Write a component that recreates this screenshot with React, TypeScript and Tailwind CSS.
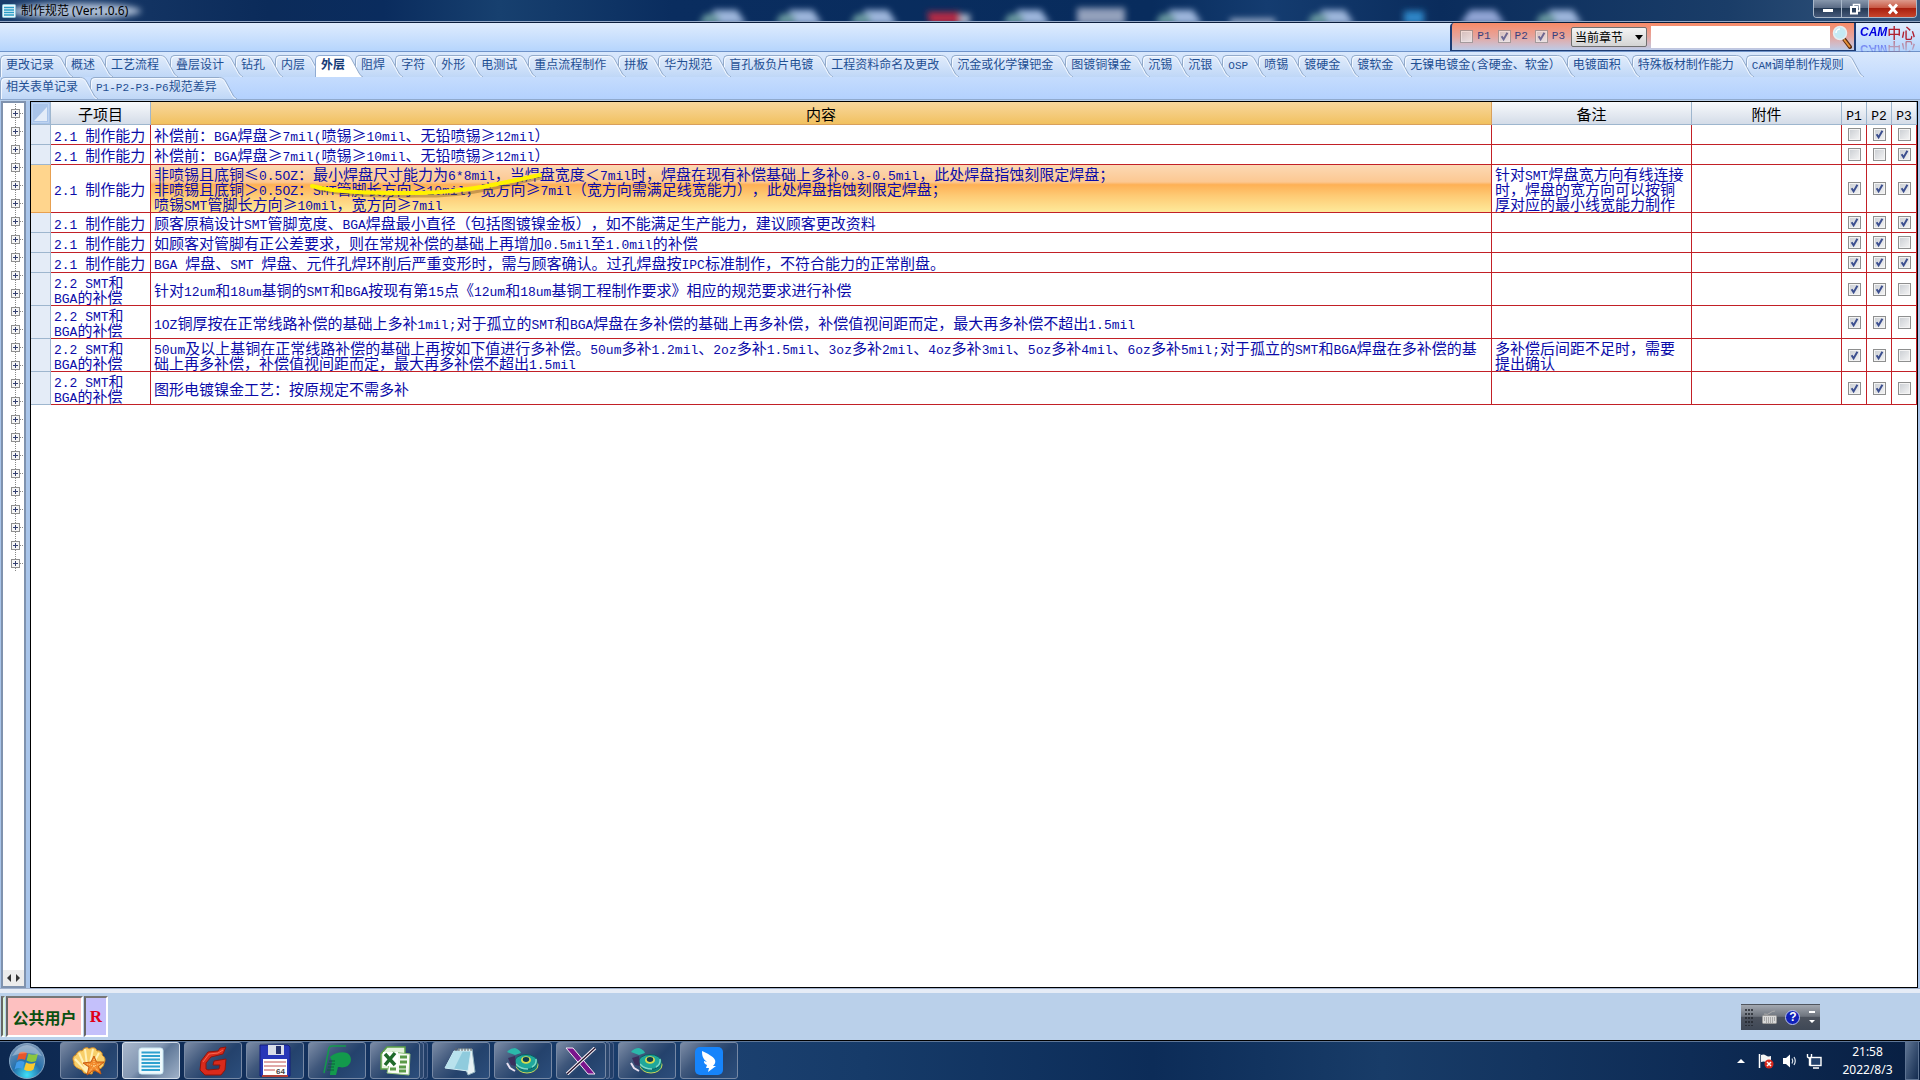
import React from "react";

const CJK = "font-['Noto_Sans_CJK_SC',sans-serif]";
const MONO = "font-['Liberation_Mono',monospace]";
const UI = "font-['Noto_Sans','Noto_Sans_CJK_SC',sans-serif]";

function Mixed({ text, latin = "text-[13px]" }: { text: string; latin?: string }) {
  return (
    <>
      {text.split(/([\x20-\x7e]+)/).map((part, i) =>
        i % 2 === 1 ? (
          <span key={i} className={`${MONO} leading-[6px] ${latin}`}>
            {part}
          </span>
        ) : (
          part
        ),
      )}
    </>
  );
}

function CheckBox({ checked, label, faded }: { checked: boolean; label: string; faded?: boolean }) {
  return (
    <span className={faded ? "relative block size-[13px] opacity-70" : "relative block size-[13px]"}>
      <input
        type="checkbox"
        defaultChecked={checked}
        aria-label={label}
        className="peer block size-[13px] appearance-none border border-[#8e8f8f] bg-linear-to-br from-[#c9cdd2] to-[#f6f6f6] shadow-[inset_0_0_0_1px_#f4f4f4]"
      />
      <svg viewBox="0 0 13 13" className="pointer-events-none absolute inset-0 hidden size-[13px] peer-checked:block">
        <path d="M3.6 6.2 L5.6 9.4 L9.4 2.8" fill="none" stroke="#3c4f8f" strokeWidth="2" />
      </svg>
    </span>
  );
}

const firstTabs = [
  "更改记录", "概述", "工艺流程", "叠层设计", "钻孔", "内层", "外层", "阻焊", "字符", "外形", "电测试",
  "重点流程制作", "拼板", "华为规范", "盲孔板负片电镀", "工程资料命名及更改", "沉金或化学镍钯金", "图镀铜镍金",
  "沉锡", "沉银", "OSP", "喷锡", "镀硬金", "镀软金", "无镍电镀金(含硬金、软金）", "电镀面积", "特殊板材制作能力",
  "CAM调单制作规则",
];
const secondTabs = ["相关表单记录", "P1-P2-P3-P6规范差异"];

function tabPadding(text: string) {
  if (text.endsWith("）")) return "pr-[6px]";
  if (text.length === 2 || text === "OSP") return "pr-[10px]";
  return text.length <= 5 ? "pr-[11px]" : "pr-[12px]";
}

function Tab({ text, z, active }: { text: string; z: number; active?: boolean }) {
  return (
    <button
      type="button"
      role="tab"
      aria-selected={!!active}
      style={{ zIndex: z }}
      className={`relative h-[22px] shrink-0 pb-[4px] pl-[6px] text-left text-[12px] leading-[16px] whitespace-nowrap ${tabPadding(text)} ${active ? "font-bold text-[#153a75]" : "text-[#1f4f93]"}`}
    >
      <span
        className={`absolute inset-y-0 right-[11px] left-0 rounded-tl-[5px] border-t border-l ${active ? "border-[#8fabd3] bg-white" : "border-[#93abcb] bg-linear-to-b from-[#e3edfb] to-[#bfd7f7] shadow-[inset_1px_1px_0_#f3f8ff]"}`}
      />
      <svg viewBox="0 0 19 22" className="absolute top-0 -right-[8px] h-[22px] w-[19px]">
        <defs>
          <linearGradient id="tabEdge" x1="0" y1="0" x2="0" y2="1">
            <stop offset="0" stopColor="#e3edfb" />
            <stop offset="1" stopColor="#bfd7f7" />
          </linearGradient>
        </defs>
        <path d="M0 0 C5 0 6.5 2 8 5 L15 18 Q17 21.5 19 22 L0 22Z" fill={active ? "#ffffff" : "url(#tabEdge)"} />
        <path d="M0 .5 C5 .5 6.5 2 8 5 L15 18 Q17 21.5 19 22" fill="none" stroke="#93abcb" />
        {!active && <path d="M0 1.5 C4.5 1.5 5.5 3 7 5.5 L14 18.5 Q16 21.5 18 22" fill="none" stroke="#f3f8ff" />}
      </svg>
      <span className="relative">
        <Mixed text={text} latin="text-[11px]" />
      </span>
    </button>
  );
}

type Row = { sub: string; body: string; note?: string; checks: [number, number, number]; size: "s" | "m" | "l" };
const rows: Row[] = [
  { sub: "2.1 制作能力", body: "补偿前：BGA焊盘≥7mil(喷锡≥10mil、无铅喷锡≥12mil）", checks: [0, 1, 0], size: "s" },
  { sub: "2.1 制作能力", body: "补偿前：BGA焊盘≥7mil(喷锡≥10mil、无铅喷锡≥12mil）", checks: [0, 0, 1], size: "s" },
  {
    sub: "2.1 制作能力",
    body: "非喷锡且底铜≤0.5OZ：最小焊盘尺寸能力为6*8mil，当焊盘宽度＜7mil时，焊盘在现有补偿基础上多补0.3-0.5mil，此处焊盘指蚀刻限定焊盘；\n非喷锡且底铜＞0.5OZ：SMT管脚长方向≥10mil，宽方向≥7mil（宽方向需满足线宽能力），此处焊盘指蚀刻限定焊盘；\n喷锡SMT管脚长方向≥10mil，宽方向≥7mil",
    note: "针对SMT焊盘宽方向有线连接\n时，焊盘的宽方向可以按铜\n厚对应的最小线宽能力制作",
    checks: [1, 1, 1],
    size: "l",
  },
  { sub: "2.1 制作能力", body: "顾客原稿设计SMT管脚宽度、BGA焊盘最小直径（包括图镀镍金板），如不能满足生产能力，建议顾客更改资料", checks: [1, 1, 1], size: "s" },
  { sub: "2.1 制作能力", body: "如顾客对管脚有正公差要求，则在常规补偿的基础上再增加0.5mil至1.0mil的补偿", checks: [1, 1, 0], size: "s" },
  { sub: "2.1 制作能力", body: "BGA 焊盘、SMT 焊盘、元件孔焊环削后严重变形时，需与顾客确认。过孔焊盘按IPC标准制作，不符合能力的正常削盘。", checks: [1, 1, 1], size: "s" },
  { sub: "2.2 SMT和\nBGA的补偿", body: "针对12um和18um基铜的SMT和BGA按现有第15点《12um和18um基铜工程制作要求》相应的规范要求进行补偿", checks: [1, 1, 0], size: "m" },
  { sub: "2.2 SMT和\nBGA的补偿", body: "1OZ铜厚按在正常线路补偿的基础上多补1mil;对于孤立的SMT和BGA焊盘在多补偿的基础上再多补偿，补偿值视间距而定，最大再多补偿不超出1.5mil", checks: [1, 1, 0], size: "m" },
  {
    sub: "2.2 SMT和\nBGA的补偿",
    body: "50um及以上基铜在正常线路补偿的基础上再按如下值进行多补偿。50um多补1.2mil、2oz多补1.5mil、3oz多补2mil、4oz多补3mil、5oz多补4mil、6oz多补5mil;对于孤立的SMT和BGA焊盘在多补偿的基\n础上再多补偿，补偿值视间距而定，最大再多补偿不超出1.5mil",
    note: "多补偿后间距不足时，需要\n提出确认",
    checks: [1, 1, 0],
    size: "m",
  },
  { sub: "2.2 SMT和\nBGA的补偿", body: "图形电镀镍金工艺：按原规定不需多补", checks: [1, 1, 0], size: "m" },
];

const rowHeight = { s: "h-[20px]", m: "h-[33px]", l: "h-[48px]" };
const cell = "border-r border-b border-[#c22026] p-0 align-middle";
const head = "h-[23px] border-r border-b border-[#9eb6ce] bg-linear-to-b from-[#f8fafc] to-[#d4dce8] p-0 text-center font-normal";

function SpecTable() {
  return (
    <table className="w-full table-fixed border-separate border-spacing-0 text-[15px] leading-[15px] text-[#0b0ba8]">
      <colgroup>
        <col className="w-[20px]" />
        <col className="w-[100px]" />
        <col />
        <col className="w-[200px]" />
        <col className="w-[150px]" />
        <col className="w-[25px]" />
        <col className="w-[25px]" />
        <col className="w-[25px]" />
      </colgroup>
      <thead className="text-black">
        <tr>
          <th className="h-[23px] border-r border-b border-[#9eb6ce] bg-[#a9c4e9] p-0">
            <svg viewBox="0 0 19 22" className="block h-[22px] w-[19px]">
              <path d="M1.5 1.5 H17.5 V20.5 H1.5Z" fill="none" stroke="#bdd3f0" />
              <path d="M16 5 V19 H3Z" fill="#e3ecf8" />
            </svg>
          </th>
          <th className={head}>子项目</th>
          <th className="h-[23px] border-r border-b border-[#d9a05c] bg-linear-to-b from-[#f8d79c] to-[#f1c15f] p-0 text-center font-normal">内容</th>
          <th className={head}>备注</th>
          <th className={head}>附件</th>
          {["P1", "P2", "P3"].map((p) => (
            <th key={p} className={head}>
              <Mixed text={p} />
            </th>
          ))}
        </tr>
      </thead>
      <tbody>
        {rows.map((r, i) => {
          const selected = r.size === "l";
          return (
            <tr key={i}>
              <td className={`${rowHeight[r.size]} border-r border-b p-0 ${selected ? "border-[#e8a050] bg-[#ffd58d]" : "border-[#9eb6ce] bg-[#e4ecf7]"}`} />
              <td className={`${cell} pl-[3px] whitespace-pre`}>
                <Mixed text={r.sub} />
              </td>
              <td
                className={`${cell} relative pl-[3px] whitespace-pre ${selected ? "bg-[linear-gradient(#fcd9b4,#fcc892_36%,#feb055_42%,#feca74_65%,#feea9b)]" : ""}`}
              >
                <Mixed text={r.body} />
                {selected && (
                  <svg viewBox="0 0 240 28" className="pointer-events-none absolute top-[6px] left-[156px] h-[28px] w-[240px]">
                    <path d="M8 18 C50 27 90 25 130 25 C165 24 190 16 234 7" fill="none" stroke="#7a5a20" strokeOpacity=".4" strokeWidth="3" strokeLinecap="round" />
                    <path d="M5 15 C35 23 80 22 112 22 C160 21 190 13 233 4" fill="none" stroke="#fff200" strokeWidth="4" strokeLinecap="round" />
                  </svg>
                )}
              </td>
              <td className={`${cell} pl-[3px] whitespace-pre`}>
                <Mixed text={r.note ?? ""} />
              </td>
              <td className={cell} />
              {r.checks.map((c, k) => (
                <td key={k} className={cell}>
                  <div className="flex justify-center">
                    <CheckBox checked={c === 1} label={`第${i + 1}行 P${k + 1}`} />
                  </div>
                </td>
              ))}
            </tr>
          );
        })}
      </tbody>
    </table>
  );
}

function DocIcon() {
  return (
    <svg viewBox="0 0 26 28" className="h-[28px] w-[26px]">
      <rect x="1" y="1" width="24" height="26" rx="2.5" fill="#eef9fd" stroke="#c7e6f2" />
      <path d="M3.500 5.500H22M3.500 9H22M3.500 12.500H22M3.500 16H22M3.500 19.500H22M3.500 23H22" stroke="#2fa0cf" strokeWidth="1.800" />
    </svg>
  );
}

function ShellIcon() {
  return (
    <svg viewBox="0 0 34 30" className="h-[30px] w-[34px]">
      <path d="M12 27 L10 24 C4 22 1 19 2 16 C0 13 1 10 4 9 C5 6 8 4 10 5 C12 1 16 1 17 3 C20 1 24 1 25 5 C28 4 31 7 30 9 C33 11 34 14 32 17 C32 21 28 24 21 25 L20 28Z" fill="#f8cf6a" stroke="#d98d22" />
      <path d="M16 27 L3 13 M16 27 L7 7 M16 27 L13 3 M16 27 L21 3 M16 27 L27 7" stroke="#fff0b8" strokeWidth="2" />
      <path d="M22 10 L24.500 16 L32 16 L26.500 20.500 L29 28 L22 24 L15 29 L17 21 L11 17 L19 16Z" fill="#f28a2c" stroke="#c65a12" strokeLinejoin="round" />
      <path d="M22 13 V20 L28 18 M22 20 L26 25 M22 20 L17 26 M22 20 L15 18" fill="none" stroke="#ffd18a" strokeDasharray="1 1" />
    </svg>
  );
}

function GerberIcon() {
  return (
    <svg viewBox="0 0 28 30" className="h-[30px] w-[28px]">
      <path d="M27 1 L24 8 L12 11 L7 17 L7 23 L9 24 L20 23 L21 19 L14 19 L15 15 L27 13 L26 24 L22 29 L6 29 L1 24 L2 15 L9 6 L19 5 L21 2Z" fill="#d92a1c" stroke="#8f150c" strokeLinejoin="round" />
      <path d="M24 4 L19 7 L10 8 L4 16" fill="none" stroke="#f46a52" />
    </svg>
  );
}

function FloppyIcon() {
  return (
    <svg viewBox="0 0 32 34" className="h-[34px] w-[32px]">
      <path d="M1 1 H29 L31 3 V32 H1Z" fill="#2738b8" stroke="#141f7c" />
      <rect x="9" y="1" width="16" height="10" fill="#d9dee8" />
      <rect x="17" y="2" width="5" height="8" fill="#26336e" />
      <rect x="4" y="15" width="24" height="16" fill="#fff" />
      <path d="M5 18H27M5 22H27M5 26H16" stroke="#c05050" />
      <rect x="3" y="31" width="26" height="2" fill="#b04038" />
      <text x="17" y="30" fontSize="8" fontWeight="bold" fill="#444" fontFamily="Liberation Sans, sans-serif">64</text>
    </svg>
  );
}

function PIcon() {
  return (
    <svg viewBox="0 0 30 32" className="h-[32px] w-[30px]">
      <path d="M8 29 L10 16 L8 12 C12 8 20 6 25 8 C31 11 30 20 23 22 C20 23 17 22 16 22 L14 30 L8 30Z" fill="#139a4c" />
      <path d="M2 28 L7 3 Q8 1 10 1 H24" fill="none" stroke="#139a4c" strokeWidth="1.500" />
      <path d="M7 16H13M6 19H13M6 22H12M5 25H12" stroke="#0c5f3a" />
    </svg>
  );
}

function ExcelIcon() {
  return (
    <svg viewBox="0 0 32 32" className="h-[32px] w-[32px]">
      <path d="M8 2 H26 V24 H2 V9Z" fill="#e4f2dc" stroke="#5aa045" strokeWidth="1.500" />
      <path d="M13 7 L31 9 L30 30 L8 28Z" fill="#f7fbf4" stroke="#8dbf7a" />
      <path d="M21 12h7M21 17h7M11 24h6M20 22h7M20 26h7" stroke="#5a9a48" strokeWidth="3" />
      <rect x="4" y="7" width="15" height="14" fill="#fff" />
      <path d="M6 9 L16 20 M16 8 L6 20" stroke="#1f6a2a" strokeWidth="3.500" />
    </svg>
  );
}

function NotepadIcon() {
  return (
    <svg viewBox="0 0 34 30" className="h-[30px] w-[34px]">
      <path d="M14 3 L28 3 L31 26 L24 29Z" fill="#e7f1f4" stroke="#93b3bf" />
      <path d="M10 5 L27 5 L24 25 L1 22Z" fill="#8fcbdd" stroke="#d5eef5" />
      <path d="M10 5 L19 5 L10 23 L1 22Z" fill="#b9e2ed" />
      <path d="M12 2v3M15 2v3M18 2v3M21 2v3M24 2v3M27 2v3" stroke="#666" />
    </svg>
  );
}

function DiscIcon() {
  return (
    <svg viewBox="0 0 34 28" className="h-[28px] w-[34px]">
      <ellipse cx="21" cy="18" rx="11" ry="8" fill="#0f7f7c" stroke="#c9d65a" />
      <ellipse cx="20" cy="15" rx="11.500" ry="7.500" fill="#1fa79b" stroke="#0c5b62" />
      <path d="M10 17 Q14 22 22 22 M30 12 Q31 17 26 20" fill="none" stroke="#7fd8c8" strokeWidth="1.500" />
      <ellipse cx="20" cy="13" rx="5" ry="3.800" fill="#d8dc4a" />
      <ellipse cx="20" cy="12.500" rx="3.200" ry="2.400" fill="#0d3c50" />
      <path d="M1 5 Q4 1 9 1 Q14 3 15 6 L9 8Z" fill="#2bb8aa" />
      <path d="M1 16 L4 21 L9 24" fill="none" stroke="#e8dff0" strokeWidth="2" />
      <path d="M2 11 L9 9 L10 19 L5 18Z" fill="#3a2f5c" />
    </svg>
  );
}

function XIcon() {
  return (
    <svg viewBox="0 0 34 28" className="h-[28px] w-[34px]">
      <path d="M2 1 H9 L31 27 H24Z" fill="#7a148c" stroke="#f4e8f4" strokeLinejoin="round" />
      <path d="M31 1 L3 27" stroke="#f6f0f6" strokeWidth="3.500" />
      <path d="M31 1 L3 27" stroke="#241028" strokeWidth="1.200" />
    </svg>
  );
}

function WingIcon() {
  return (
    <svg viewBox="0 0 28 28" className="size-[28px]">
      <rect width="28" height="28" rx="5" fill="#1684fb" />
      <path d="M7 4 C13 7 18 9 20 13 C21 16 19 18 18 19 L21 19 L13 25 L14 21 L11 21 L12 18 C9 17 9 15 9 14 L12 15 C8 12 7 9 7 4Z" fill="#fff" />
    </svg>
  );
}

function TaskButton({ label, children, active, stacked }: { label: string; children: React.ReactNode; active?: boolean; stacked?: boolean }) {
  return (
    <div className={stacked ? "flex w-[58px]" : "flex"}>
      <button
        type="button"
        aria-label={label}
        className={`flex h-[37px] items-center justify-center rounded-[3px] border ${stacked ? "w-[50px]" : "w-[58px]"} ${active ? "border-[#d3dde9] bg-[linear-gradient(135deg,#a9b8cc,#8296b2_45%,#5f7898_55%,#9fb1c8)]" : "border-[#7688a4] bg-[linear-gradient(135deg,#7c8ca6,#40587c_35%,#24426c_60%,#2c4e7c)]"}`}
      >
        {children}
      </button>
      {stacked && (
        <>
          <span className="h-[37px] w-[4px] rounded-r-[3px] border-y border-r border-[#60759a] bg-[#2b476f]" />
          <span className="h-[37px] w-[4px] rounded-r-[3px] border-y border-r border-[#4c628a] bg-[#223f69]" />
        </>
      )}
    </div>
  );
}

function TitleBar() {
  return (
    <header className="relative flex h-[23px] justify-between overflow-hidden border-b border-[#0b1d3c] bg-[linear-gradient(90deg,#1b3d6c,#0b2b5a_14%,#0a2c5e_20%,#17406f_26%,#0a2d5f_35%,#082c5d_60%,#143c70_66%,#0a2c5c_75%,#1a3d68_90%,#35577f)]">
      <svg viewBox="0 0 1920 22" preserveAspectRatio="none" className="absolute inset-0 h-[22px] w-full">
        <defs>
          <filter id="soft" x="-20%" y="-50%" width="140%" height="200%">
            <feGaussianBlur stdDeviation="3" />
          </filter>
        </defs>
        <g filter="url(#soft)">
          {[699, 775, 850, 1003, 1155, 1307, 1535].map((x) => (
            <g key={x}>
              <path d={`M${x + 14} 24 V10 H${x + 38} L${x + 47} 24Z`} fill="#9db6dc" />
              <path d={`M${x} 24 L${x + 6} 14 H${x + 20} V24Z`} fill="#6b9aa0" />
            </g>
          ))}
          <path d="M1460 24 L1470 10 H1495 L1505 24Z" fill="#90a4d4" />
          <path d="M927 12 H960 V24 H930Z" fill="#b52c44" />
          <path d="M960 14 H970 V24 H960Z" fill="#a9b4c8" />
          <path d="M1077 8 H1125 V24 H1077Z" fill="#93a0bc" />
          <path d="M1230 19 H1275 V24 H1230Z" fill="#b4c2da" />
          <path d="M1404 11 H1424 V24 H1404Z" fill="#2f86c8" />
          <ellipse cx="75" cy="11" rx="66" ry="8" fill="#a9bad2" />
        </g>
        <path d="M0 21.500H1920" stroke="#93a8c6" />
      </svg>
      <div className={`relative flex items-center gap-[5px] pl-[2px] text-[12px] leading-[20px] text-black ${UI}`}>
        <svg viewBox="0 0 14 14" className="size-[14px]">
          <rect x=".5" y=".5" width="13" height="13" rx="1" fill="#e8f6fb" stroke="#8fc4d8" />
          <path d="M2 3.500H12M2 6H12M2 8.500H12M2 11H12" stroke="#2a9cc6" strokeWidth="1.300" />
        </svg>
        <h1>制作规范 (Ver:1.0.6)</h1>
      </div>
      <div className="relative mr-[3px] flex h-[18px] overflow-hidden rounded-b-[4px] border border-t-0 border-[#a9b8ca]">
        <button type="button" aria-label="最小化" className="flex w-[28px] items-center justify-center border-r border-[#a9b8ca] bg-[linear-gradient(#8797ac,#5b6c86_45%,#243954_50%,#45597a)]">
          <svg viewBox="0 0 12 12" className="size-[12px]"><rect x="1" y="6" width="10" height="3" fill="#fff" /></svg>
        </button>
        <button type="button" aria-label="还原" className="flex w-[27px] items-center justify-center border-r border-[#a9b8ca] bg-[linear-gradient(#8797ac,#5b6c86_45%,#243954_50%,#45597a)]">
          <svg viewBox="0 0 12 12" className="size-[12px]">
            <path d="M4.500 3V1.500H10.500V8H9" fill="none" stroke="#fff" strokeWidth="1.600" />
            <rect x="2" y="4" width="6" height="6.500" fill="none" stroke="#fff" strokeWidth="2" />
          </svg>
        </button>
        <button type="button" aria-label="关闭" className="flex w-[47px] items-center justify-center bg-[linear-gradient(#dd9a8c,#c95a46_45%,#a8200f_50%,#c8452c)]">
          <svg viewBox="0 0 12 12" className="size-[12px]">
            <path d="M2 1.500L10 10.500M10 1.500L2 10.500" stroke="#fff" strokeWidth="2.800" />
          </svg>
        </button>
      </div>
    </header>
  );
}

function SearchBar() {
  return (
    <div className="flex h-[29px] justify-end border-b border-[#6e92c8] bg-linear-to-b from-[#dfecfd] to-[#b6d5fd]">
      <div className="flex h-[28px] items-center rounded-tl-[4px] border-x-2 border-b border-[#1d3c74] bg-linear-to-b from-[#f88a66] via-[#e6a49c] to-[#bccbe8] pr-[2px] pl-[8px]">
        <div className="flex gap-[7px] pr-[6px] text-[#39407e]">
          {[false, true, true].map((c, i) => (
            <div key={i} className="flex items-center gap-[4px] text-[11px]">
              <CheckBox checked={c} label={`P${i + 1}`} faded />
              <span className={MONO}>P{i + 1}</span>
            </div>
          ))}
        </div>
        <div className="relative">
          <select aria-label="范围" className="block h-[20px] w-[76px] appearance-none rounded-[2px] border border-[#707070] bg-linear-to-b from-[#f4f4f4] to-[#d4d4d4] pl-[3px] text-[12px] leading-[16px] text-black">
            <option>当前章节</option>
          </select>
          <svg viewBox="0 0 8 5" className="pointer-events-none absolute top-[8px] right-[4px] h-[5px] w-[8px]"><path d="M0 0H8L4 5Z" /></svg>
        </div>
        <input type="text" aria-label="搜索" className="ml-[4px] h-[22px] w-[179px] bg-white px-1 text-[12px] outline-none" />
        <button type="button" aria-label="查找" className="ml-[2px]">
          <svg viewBox="0 0 20 24" className="h-[24px] w-[20px]">
            <path d="M12 14 L18 22" stroke="#5c2c10" strokeWidth="4" strokeLinecap="round" />
            <path d="M12.500 15 L17.500 21.500" stroke="#e8923a" strokeWidth="2" strokeLinecap="round" />
            <circle cx="8" cy="8" r="6.500" fill="#c4eaf4" stroke="#e6eef2" strokeWidth="1.500" />
            <path d="M4 8a4 4 0 0 1 4-4" fill="none" stroke="#fff" strokeWidth="1.500" />
          </svg>
        </button>
      </div>
      <div className="w-[64px] pl-[4px]">
        <div className="flex h-[18px] items-center leading-[18px] whitespace-nowrap [-webkit-box-reflect:below_-1px_linear-gradient(transparent_10%,rgba(0,0,0,0.6))]">
          <span className="font-['Liberation_Sans',sans-serif] text-[12px] font-bold text-[#0000e0] italic">CAM</span>
          <span className="text-[14px] font-medium text-[#b02030]">中心</span>
        </div>
      </div>
    </div>
  );
}

function Tree() {
  return (
    <aside className="mr-[4px] ml-[1px] flex w-[25px] shrink-0 flex-col justify-between border-2 border-[#7f92ae] bg-white">
      <ul className="pt-[1px]">
        {Array.from({ length: 26 }, (_, i) => (
          <li key={i} className="h-[18px]">
            <button type="button" aria-label={`展开 ${i + 1}`} className="block">
              <svg viewBox="0 0 21 18" className="block h-[18px] w-[21px]">
                <path d="M12.500 14V18M12.500 0V5" stroke="#888" strokeDasharray="1 1" />
                <path d="M17 9.500H21" stroke="#888" strokeDasharray="1 1" />
                <rect x="8.500" y="5.500" width="8" height="8" fill="#f6f6f6" stroke="#8f8f8f" />
                <path d="M10 9.500H15M12.500 7V12" stroke="#333f70" />
              </svg>
            </button>
          </li>
        ))}
      </ul>
      <div className="flex h-[16px] items-center justify-between bg-[#ececec] px-[4px]">
        <svg viewBox="0 0 4 8" className="h-[8px] w-[4px]"><path d="M4 0V8L0 4Z" fill="#333" /></svg>
        <svg viewBox="0 0 4 8" className="h-[8px] w-[4px]"><path d="M0 0V8L4 4Z" fill="#333" /></svg>
      </div>
    </aside>
  );
}

function StatusBar() {
  return (
    <div className="flex h-[47px] items-center justify-between bg-[#bad0ea] pr-[100px]">
      <div className="flex h-[41px] gap-[1px] pl-[1px]">
        <span className="w-[4px] border-2 border-t-[#777] border-r-[#d9f3dd] border-b-white border-l-[#666]" />
        <span className="flex w-[77px] items-center justify-center border-2 border-t-[#777] border-r-white border-b-white border-l-[#666] bg-[#fdc0c0] text-[16px] font-bold text-[#0a5010]">公共用户</span>
        <span className="flex w-[24px] items-center justify-center border-2 border-t-[#777] border-r-white border-b-white border-l-[#666] bg-[#c4c0fb] font-['Liberation_Serif',serif] text-[17px] font-bold text-[#e00018]">R</span>
      </div>
      <div className="flex h-[26px] w-[79px] items-center justify-between border-t border-[#50555e] bg-[linear-gradient(#a3a8b0,#6e747e_45%,#4c525d_50%,#3f4856)] pr-[5px] pl-[4px]">
        <svg viewBox="0 0 8 18" className="h-[18px] w-[8px]">
          <path d="M1 1V18M4 1V18M7 1V18" stroke="#22262c" strokeWidth="1.500" strokeDasharray="2 2" />
        </svg>
        <svg viewBox="0 0 15 14" className="h-[14px] w-[15px]">
          <path d="M2 4Q6 5 8 3T13 1" fill="none" stroke="#aaa" />
          <rect x=".5" y="5.500" width="14" height="8" rx="1" fill="#d9d9d9" stroke="#999" />
          <path d="M2 8H13M2 10H13M4 12H11" stroke="#777" strokeDasharray="1 1" />
        </svg>
        <span className="flex size-[15px] items-center justify-center rounded-full border border-[#b9c4ee] bg-[#1020b8] font-['Liberation_Sans',sans-serif] text-[12px] leading-[13px] font-bold text-white">?</span>
        <svg viewBox="0 0 6 14" className="h-[14px] w-[6px]"><path d="M0 1H6V3H0ZM0 10H6L3 13Z" fill="#fff" /></svg>
      </div>
    </div>
  );
}

function TaskBar() {
  return (
    <footer className="flex h-[40px] items-center justify-between border-t border-black bg-[linear-gradient(90deg,#0d2850,#12305c_15%,#1b406f_38%,#163b69_45%,#0c2c58_60%,#183c68_72%,#0e2c56_88%,#081f42)] shadow-[inset_0_1px_0_#5f7797]">
      <nav className="flex items-center gap-[4px]">
        <button type="button" aria-label="开始" className="w-[56px] pl-[7px]">
          <svg viewBox="0 0 38 38" className="size-[38px]">
            <defs>
              <radialGradient id="orb" cx=".5" cy=".9" r=".9">
                <stop offset="0" stopColor="#3fe0f8" />
                <stop offset=".45" stopColor="#2470ac" />
                <stop offset="1" stopColor="#7d98b8" />
              </radialGradient>
            </defs>
            <circle cx="20" cy="19" r="17.500" fill="url(#orb)" stroke="#86a6c4" />
            <path d="M12 11Q16 8.500 20 11L18 18Q14 16 10 18.500Z" fill="#e8562a" />
            <path d="M21.500 11.500Q26 14 31 11.500L29 19Q24 21 19.500 18.500Z" fill="#8cc63e" />
            <path d="M9.500 20.500Q13.500 18 17.500 20L15.500 27Q11.500 25 7.500 27.500Z" fill="#3f9be8" />
            <path d="M19 20.500Q24 23 28.500 20.500L26.500 27.500Q22 30.500 17 27.500Z" fill="#fbc92f" />
            <path d="M5 14Q12 3 20 3T35 14Q20 8 5 14Z" fill="#fff" fillOpacity=".3" />
          </svg>
        </button>
        <TaskButton label="贝壳"><ShellIcon /></TaskButton>
        <TaskButton label="制作规范" active><DocIcon /></TaskButton>
        <TaskButton label="Genesis"><GerberIcon /></TaskButton>
        <TaskButton label="存档"><FloppyIcon /></TaskButton>
        <TaskButton label="项目"><PIcon /></TaskButton>
        <TaskButton label="表格" stacked><ExcelIcon /></TaskButton>
        <TaskButton label="记事本"><NotepadIcon /></TaskButton>
        <TaskButton label="光盘"><DiscIcon /></TaskButton>
        <TaskButton label="X" stacked><XIcon /></TaskButton>
        <TaskButton label="光盘二"><DiscIcon /></TaskButton>
        <TaskButton label="钉钉"><WingIcon /></TaskButton>
      </nav>
      <div className="flex h-full items-center">
        <svg viewBox="0 0 8 4" className="mr-[13px] h-[4px] w-[8px]"><path d="M0 4L4 0L8 4Z" fill="#fff" /></svg>
        <svg viewBox="0 0 16 16" className="mr-[8px] size-[16px]">
          <path d="M1.500 1V15" stroke="#fff" strokeWidth="1.500" />
          <path d="M3 2Q6 1 8 2.500T13 3V10Q10 10 8 9T3 9Z" fill="#f4f4f4" />
          <circle cx="11" cy="11" r="4.500" fill="#d8281c" />
          <path d="M9 9L13 13M13 9L9 13" stroke="#fff" strokeWidth="1.500" />
        </svg>
        <svg viewBox="0 0 16 16" className="mr-[8px] size-[16px]">
          <path d="M1 5H4L8 1.500V14.500L4 11H1Z" fill="#fff" />
          <path d="M10 5.500Q11.500 8 10 10.500M12 4Q14.500 8 12 12" fill="none" stroke="#dfe6ee" strokeWidth="1.200" />
        </svg>
        <svg viewBox="0 0 16 16" className="size-[16px]">
          <rect x="4.500" y="4.500" width="10.500" height="8" fill="#22406a" stroke="#fff" strokeWidth="1.400" />
          <path d="M7 15H13M1.500 1V4Q3.500 6 5.500 4V1M3.500 5V12H5" fill="none" stroke="#fff" strokeWidth="1.400" />
        </svg>
        <time className={`w-[83px] pl-[8px] text-center text-[12px] leading-[18px] text-white ${UI}`}>
          21:58
          <br />
          2022/8/3
        </time>
        <button type="button" aria-label="显示桌面" className="mr-[1px] h-full w-[14px] border border-[#5d7392] bg-linear-to-br from-[#5f7593] to-[#142c50]" />
      </div>
    </footer>
  );
}

export default function App() {
  return (
    <div className={`flex h-screen flex-col overflow-hidden bg-[#bad0ea] [text-spacing-trim:space-all] ${CJK}`}>
      <TitleBar />
      <SearchBar />
      <nav role="tablist" className="isolate border-b border-[#8fa9cd] bg-linear-to-b from-[#d9e8fc] to-[#b3d1fe] pt-[3px]">
        <div className="flex h-[22px]">
          {firstTabs.map((t, i) => (
            <Tab key={t} text={t} z={t === "外层" ? 60 : 50 - i} active={t === "外层"} />
          ))}
        </div>
        <div className="flex h-[22px]">
          {secondTabs.map((t, i) => (
            <Tab key={t} text={t} z={50 - i} />
          ))}
        </div>
      </nav>
      <main className="mt-[1px] flex min-h-0 flex-1 bg-[#a9c5ea]">
        <Tree />
        <section className="mr-[2px] min-w-0 flex-1 border border-black bg-white">
          <SpecTable />
        </section>
      </main>
      <div className="h-[5px] border-t border-[#9fb0cc] bg-[#e6ecf6]" />
      <StatusBar />
      <TaskBar />
    </div>
  );
}
